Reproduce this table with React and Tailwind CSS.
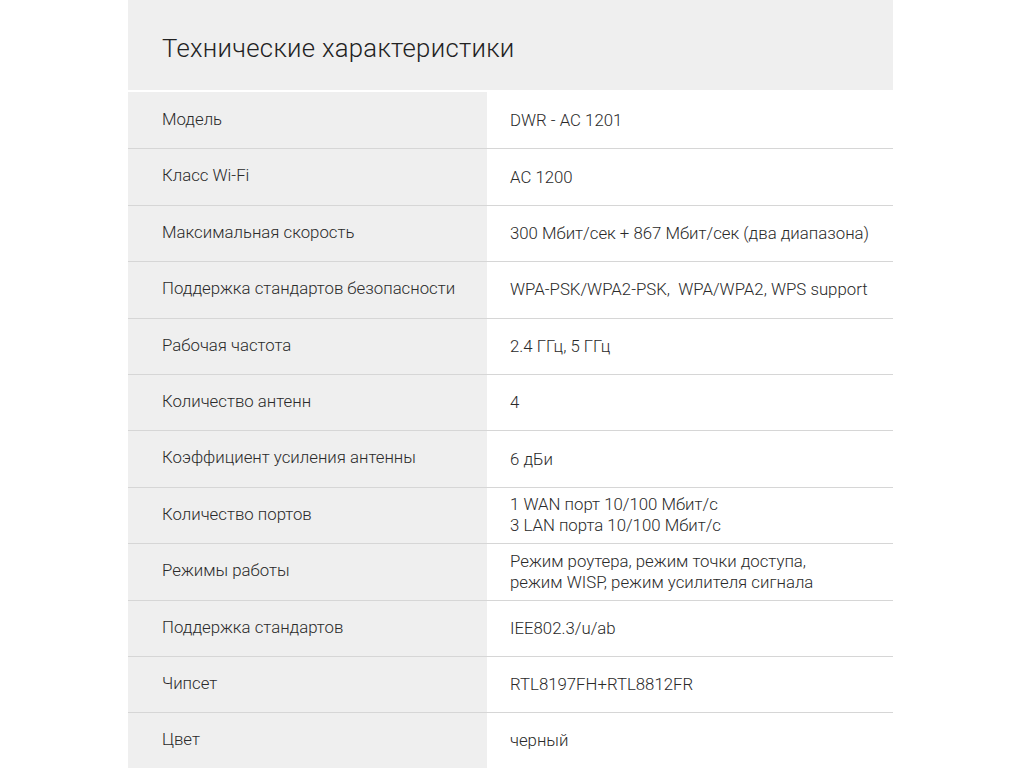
const rows = [
  ['Модель', ['DWR - AC 1201']],
  ['Класс Wi-Fi', ['AC 1200']],
  ['Максимальная скорость', ['300 Мбит/сек + 867 Мбит/сек (два диапазона)']],
  ['Поддержка стандартов безопасности', ['WPA-PSK/WPA2-PSK,  WPA/WPA2, WPS support']],
  ['Рабочая частота', ['2.4 ГГц, 5 ГГц']],
  ['Количество антенн', ['4']],
  ['Коэффициент усиления антенны', ['6 дБи']],
  ['Количество портов', ['1 WAN порт 10/100 Мбит/с', '3 LAN порта 10/100 Мбит/с']],
  ['Режимы работы', ['Режим роутера, режим точки доступа,', 'режим WISP, режим усилителя сигнала']],
  ['Поддержка стандартов', ['IEE802.3/u/ab']],
  ['Чипсет', ['RTL8197FH+RTL8812FR']],
  ['Цвет', ['черный']],
];

export default function App() {
  return (
    <div className="w-[1024px] h-[768px] bg-white overflow-hidden" style={{ fontFamily: 'Roboto, "Liberation Sans", sans-serif' }}>
      <div className="ml-[128px] w-[765px]">
        <div className="h-[90px] mb-[2px] bg-[#efefef] flex items-center pl-[34px] pt-[6px]">
          <h1 className="text-[25.7px] font-light text-[#222] tracking-[0.3px]">Технические характеристики</h1>
        </div>
        <div className="flex flex-col">
          {rows.map(([label, value], i) => (
            <div key={i} className={`flex h-[56.4px] ${i > 0 ? 'border-t border-[#d6d6d6]' : ''}`}>
              <div className="w-[359px] bg-[#efefef] flex items-center pl-[34px] pb-[2px] text-[16.8px] font-light text-[#2a2a2a]">
                {label}
              </div>
              <div className="flex-1 flex flex-col justify-center pl-[23px] text-[16.8px] leading-[21px] font-light text-[#2a2a2a]">
                {value.map((v, j) => (
                  <span key={j} className="whitespace-pre">{v}</span>
                ))}
              </div>
            </div>
          ))}
        </div>
      </div>
    </div>
  );
}
